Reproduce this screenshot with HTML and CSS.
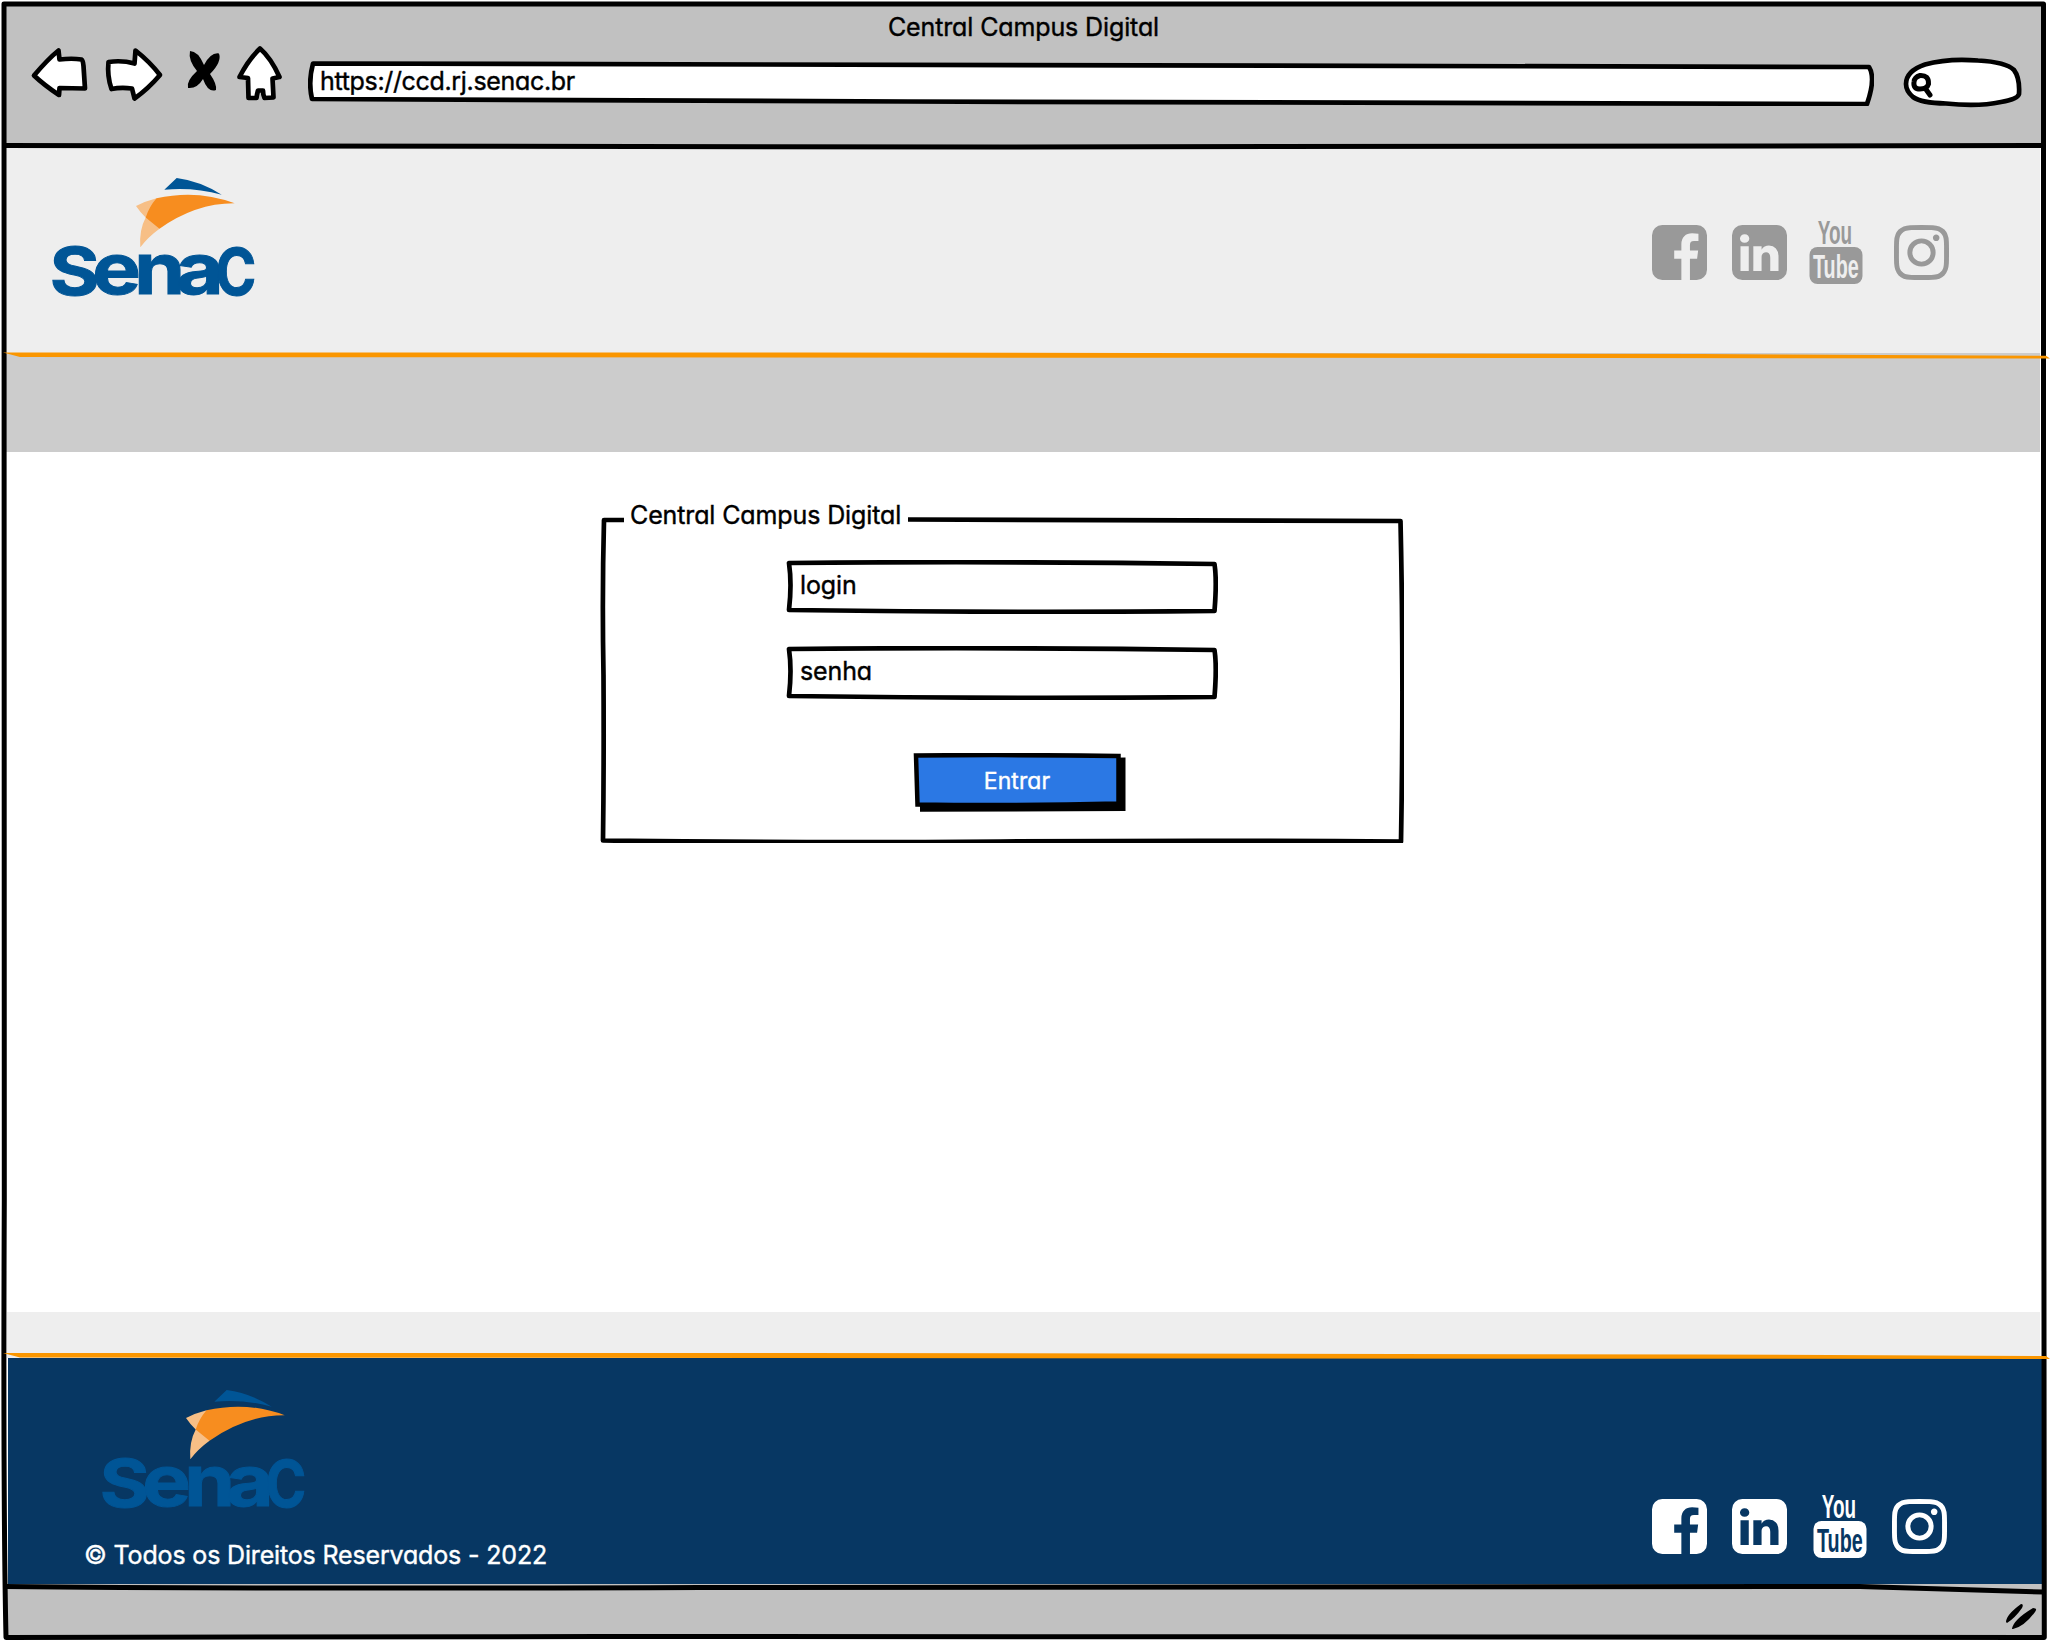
FILE: index.html
```html
<!DOCTYPE html>
<html lang="pt-BR">
<head>
<meta charset="utf-8">
<title>Central Campus Digital</title>
<link rel="stylesheet" href="styles.css">
</head>
<body>
<svg class="defs" width="0" height="0" aria-hidden="true">
  <defs>
    <symbol id="facebook" viewBox="0 0 1536 1536"><path transform="translate(0 1408) scale(1 -1)" d="M1248 1408q119 0 203.5 -84.5t84.5 -203.5v-960q0 -119 -84.5 -203.5t-203.5 -84.5h-188v595h199l30 232h-229v148q0 56 23.5 84t91.5 28l122 1v207q-63 9 -178 9q-136 0 -217.5 -80t-81.5 -226v-171h-200v-232h200v-595h-532q-119 0 -203.5 84.5t-84.5 203.5v960q0 119 84.5 203.5t203.5 84.5h960z"/></symbol>
    <symbol id="linkedin" viewBox="0 0 1536 1536"><path transform="translate(0 1408) scale(1 -1)" d="M237 122h231v694h-231v-694zM483 1030q-1 52 -36 86t-93 34t-94.5 -34t-36.5 -86q0 -51 35.5 -85.5t92.5 -34.5h1q59 0 95 34.5t36 85.5zM1068 122h231v398q0 154 -73 233t-193 79q-136 0 -209 -117h2v101h-231q3 -66 0 -694h231v388q0 38 7 56q15 35 45 59.5t74 24.5q116 0 116 -157v-371zM1536 1120v-960q0 -119 -84.5 -203.5t-203.5 -84.5h-960q-119 0 -203.5 84.5t-84.5 203.5v960q0 119 84.5 203.5t203.5 84.5h960q119 0 203.5 -84.5t84.5 -203.5z"/></symbol>
    <symbol id="instagram" viewBox="0 0 1536 1536"><path transform="translate(0 1408) scale(1 -1)" d="M1024 640q0 106 -75 181t-181 75t-181 -75t-75 -181t75 -181t181 -75t181 75t75 181zM1162 640q0 -164 -115 -279t-279 -115t-279 115t-115 279t115 279t279 115t279 -115t115 -279zM1270 1050q0 -38 -27 -65t-65 -27t-65 27t-27 65t27 65t65 27t65 -27t27 -65zM768 1270q-7 0 -76.5 0.5t-105.5 0t-96.5 -3t-103 -10t-71.5 -18.5q-50 -20 -88 -58t-58 -88q-11 -29 -18.5 -71.5t-10 -103t-3 -96.5t0 -105.5t0.5 -76.5t-0.5 -76.5t0 -105.5t3 -96.5t10 -103t18.5 -71.5q20 -50 58 -88t88 -58q29 -11 71.5 -18.5t103 -10t96.5 -3t105.5 0t76.5 0.5t76.5 -0.5t105.5 0t96.5 3t103 10t71.5 18.5q50 20 88 58t58 88q11 29 18.5 71.5t10 103t3 96.5t0 105.5t-0.5 76.5t0.5 76.5t0 105.5t-3 96.5t-10 103t-18.5 71.5q-20 50 -58 88t-88 58q-29 11 -71.5 18.5t-103 10t-96.5 3t-105.5 0t-76.5 -0.5zM1536 640q0 -229 -5 -317q-10 -208 -124 -322t-322 -124q-88 -5 -317 -5t-317 5q-208 10 -322 124t-124 322q-5 88 -5 317t5 317q10 208 124 322t322 124q88 5 317 5t317 -5q208 -10 322 -124t124 -322q5 -88 5 -317z"/></symbol>
    <symbol id="star" viewBox="0 0 200 70">
      <path fill="#005596" d="M112.3 11.7 124.7 0Q148 3 169.7 16.7Q142 9 112.3 11.7Z"/>
      <path fill="#f7bf86" d="M84 28Q94 23 104.5 20.3L107.5 50.7Q96 59 88.3 69.3Q87 52 93.7 39.5Q88 34 84 28Z"/>
      <path fill="#f78d1f" d="M104.5 20.3Q145 11 182.7 25.3Q144 25 107.5 50.7L93.7 39.5Q97 29 104.5 20.3Z"/>
    </symbol>
  </defs>
</svg>

<div class="browser">
  <header class="toolbar">
    <div class="window-title">Central Campus Digital</div>
    <div class="controls">
      <svg class="nav-icons" viewBox="0 0 260 64" width="260" height="64">
        <g fill="#fff" stroke="#000" stroke-width="4.7" stroke-linejoin="round">
          <path d="M10 35.5Q24 19 34.5 10.5L35.5 19.5Q48 18 57.5 19.5Q59 20 59.5 26L61 48.5L35.5 48L35 55Q20 45 10 35.5Z"/>
          <path d="M84.5 22Q98 20 110.5 23.5L111.5 10.5Q126 22 136 35Q124 49 110.5 58.5L108 48.5Q97 47 87.5 49Q83 36 84.5 22Z"/>
          <path d="M236 8.5Q247 18 255.5 37L248.5 38.5L249.5 57.5L240.5 58Q239 55 239 50.5L234 50.5Q233 54 232.5 58L224.5 58L224 38L215.5 37Q224 20 236 8.5Z"/>
        </g>
        <path d="M166 11Q174 11 180 25Q187 12 195 13.5Q198 22 186 34Q193 44 192 50Q184 53 179 39Q173 49 164 48Q162 41 173 31Q164 20 166 11Z"/>
      </svg>
      <div class="address">
        <svg class="outline" viewBox="0 0 1566 46"><path fill="#fff" stroke="#000" stroke-width="4.7" stroke-linejoin="round" d="M5 3.5Q780 3 1561 7Q1568 18 1559 44Q1000 44 600 41.5Q300 39.5 4 39Q0 22 5 3.5Z"/></svg>
        <span class="url">https://ccd.rj.senac.br</span>
      </div>
      <svg class="search" viewBox="0 0 120 52" width="120" height="52">
        <path fill="#fff" stroke="#000" stroke-width="4.7" d="M3 27Q3 14 22 7.5Q45 1 75 3.5Q103 5 111 13Q117 21 116 37Q115 42 98 45Q75 50 43 46.5Q18 46 10 40Q3 34 3 27Z"/>
        <path fill="none" stroke="#000" stroke-width="5" stroke-linecap="round" d="M17 18.5Q26 18 25.5 27Q24 32 17 32Q10 32 11 25Q11.5 20 17 18.5ZM22 31L27 38"/>
      </svg>
    </div>
  </header>

  <section class="site-header">
    <svg class="logo" viewBox="0 0 200 120" width="200" height="120" role="img" aria-label="Senac">
      <use href="#star" width="200" height="70"/>
      <text class="wordmark" transform="scale(1.15 1)"><tspan font-size="66" x="-2" y="117">S</tspan><tspan font-size="71" x="35 71.5 108" y="116">ena</tspan></text>
      <text class="wordmark" font-size="64" transform="translate(163.5 116.5) scale(.86 1)">C</text>
    </svg>
    <nav class="social">
      <svg class="icon"><use href="#facebook"/></svg>
      <svg class="icon"><use href="#linkedin"/></svg>
      <svg class="youtube" viewBox="0 0 54 64" width="54" height="64"><rect x="0.5" y="27" width="53" height="37" rx="8"/><text class="you" transform="translate(8.7 24) scale(.52 1)" textLength="66" lengthAdjust="spacingAndGlyphs">You</text><text class="tube" transform="translate(4 57.5) scale(.52 1)" textLength="88" lengthAdjust="spacingAndGlyphs">Tube</text></svg>
      <svg class="icon"><use href="#instagram"/></svg>
    </nav>
  </section>
  <div class="band"></div>

  <main class="content">
    <section class="login-box">
      <svg class="outline" viewBox="0 0 804 328"><path fill="none" stroke="#000" stroke-width="4.7" stroke-linejoin="round" d="M24 5L4 5Q2 80 3.5 160Q4 250 3 325.5Q200 328 400 326.5T801 326.5Q804 160 800.5 6Q560 6 308 4.5"/></svg>
      <h1 class="legend">Central Campus Digital</h1>
      <div class="field">
        <svg class="outline" viewBox="0 0 432 54"><path fill="#fff" stroke="#000" stroke-width="4.7" stroke-linejoin="round" d="M3 3Q210 1 428.5 4Q431 20 428.5 51Q220 53 3 50Q6 24 3 3Z"/></svg>
        <span>login</span>
      </div>
      <div class="field">
        <svg class="outline" viewBox="0 0 432 54"><path fill="#fff" stroke="#000" stroke-width="4.7" stroke-linejoin="round" d="M3 3Q210 1 428.5 4Q431 20 428.5 51Q220 53 3 50Q6 24 3 3Z"/></svg>
        <span>senha</span>
      </div>
      <div class="button" role="button">
        <svg class="outline" viewBox="0 0 214 60"><path d="M7 8L212.5 4.5V58L7 58.8Z"/><path fill="#2b78e4" stroke="#000" stroke-width="4.5" d="M3 2.5Q100 1.5 205.5 3V50.5Q100 53 4.5 51.5Z"/></svg>
        <span>Entrar</span>
      </div>
    </section>
  </main>

  <div class="pre-footer"></div>
  <footer class="site-footer">
    <div class="brand">
      <svg class="logo" viewBox="0 0 200 120" width="200" height="120" role="img" aria-label="Senac">
        <use href="#star" width="200" height="70"/>
        <text class="wordmark" transform="scale(1.15 1)"><tspan font-size="66" x="-2" y="117">S</tspan><tspan font-size="71" x="35 71.5 108" y="116">ena</tspan></text>
        <text class="wordmark" font-size="64" transform="translate(163.5 116.5) scale(.86 1)">C</text>
      </svg>
      <p class="copyright">© Todos os Direitos Reservados - 2022</p>
    </div>
    <nav class="social">
      <svg class="icon"><use href="#facebook"/></svg>
      <svg class="icon"><use href="#linkedin"/></svg>
      <svg class="youtube" viewBox="0 0 54 64" width="54" height="64"><rect x="0.5" y="27" width="53" height="37" rx="8"/><text class="you" transform="translate(8.7 24) scale(.52 1)" textLength="66" lengthAdjust="spacingAndGlyphs">You</text><text class="tube" transform="translate(4 57.5) scale(.52 1)" textLength="88" lengthAdjust="spacingAndGlyphs">Tube</text></svg>
      <svg class="icon"><use href="#instagram"/></svg>
    </nav>
  </footer>
  <div class="status-bar">
    <svg viewBox="0 0 36 30" width="36" height="30"><path d="M2 21Q2 14 17 3Q20 3 18 7Q11 17 3 22ZM8 28Q9 19 29 7Q34 7 31 11Q20 26 9 28Z"/></svg>
  </div>

  <svg class="frame" viewBox="0 0 2050 1642" width="2050" height="1642">
    <g fill="none" stroke="#000" stroke-width="5" stroke-linejoin="round">
      <path d="M4 4H2043.5V800Q2043 1300 2044.3 1637.5L1500 1637Q1000 1637 600 1636.5Q300 1636 6 1637.5Q3 1500 4.3 1200L4 4Z"/>
      <path d="M5 145.5Q250 147 1000 147L2043 145.5"/>
      <path d="M5 1586.5Q250 1589 700 1587.5L1860 1586.5L2043 1592"/>
    </g>
    <g fill="#fa9600">
      <path d="M3 352.5H800L1700 354L2046 355.8L2050 358.5L1600 358L20 357Z"/>
      <path d="M3 1353H800L1700 1354.5L2046 1356L2050 1359L1600 1358.7L20 1357.5Z"/>
    </g>
  </svg>
</div>
</body>
</html>
```
FILE: styles.css
```css
* { box-sizing: border-box; }
body { margin: 0; background: #fff; color: #000; font-family: Inter, "Liberation Sans", sans-serif; font-size: 25px; line-height: 30px; letter-spacing: -0.12px; -webkit-text-stroke: 0.4px currentColor; font-feature-settings: "cv11"; }
svg { display: block; flex: none; }
svg text { letter-spacing: 0; -webkit-text-stroke: 0; }
.defs { position: absolute; }
.browser { position: relative; display: flex; flex-direction: column; width: 2050px; height: 1642px; padding: 3px 8px 4px 5px; overflow: hidden; }
.frame, .outline { position: absolute; left: 0; top: 0; pointer-events: none; }
.outline { width: 100%; height: 100%; }

.toolbar { height: 143px; background: #c1c1c1; padding-top: 9px; }
.window-title { text-align: center; }
.controls { display: flex; align-items: flex-start; padding-left: 19px; }
.nav-icons { margin-top: -2px; }
.address { position: relative; width: 1566px; height: 46px; margin: 18px 0 0 24px; padding: 6px 0 0 12px; }
.url { position: relative; letter-spacing: -0.33px; }
.search { margin: 15px 0 0 29px; }

.site-header { height: 207px; margin: 0 2px; background: #eee; display: flex; justify-content: space-between; padding: 32px 91px 0 45px; }
.band { height: 99px; margin: 0 2px 0 1px; background: #ccc; }
.logo, .youtube { overflow: visible; }
.wordmark { font-weight: 700; font-feature-settings: normal; fill: #005596; stroke: #005596; stroke-width: 1px; }

.social { display: flex; align-items: flex-start; padding-top: 47px; fill: #999; --surface: #eee; }
.icon { width: 55px; height: 55px; margin-right: 25px; }
.icon:last-child { margin: 0 0 0 31px; }
.youtube { margin: -5px 0 0 -3px; }
.you, .tube { font: 700 33px "Liberation Sans", sans-serif; }
.tube { fill: var(--surface); }

.content { height: 860px; padding: 63px 0 0 595px; }
.login-box { position: relative; width: 804px; height: 328px; padding-left: 186px; }
.legend { position: relative; width: max-content; margin: 0 0 0 -156px; font-size: 25px; line-height: 30px; font-weight: 400; top: -15px; }
.field { position: relative; width: 432px; height: 54px; margin: 15px 0 32px; padding: 10px 0 0 14px; }
.field span, .button span { position: relative; }
.field + .field { margin-top: 0; }
.button { position: relative; width: 214px; height: 60px; margin: 53px 0 0 127px; padding: 13px 6px 0 0; text-align: center; color: #fff; font-size: 23px; letter-spacing: 0.1px; }

.pre-footer { height: 46px; margin: 0 2px; background: #eee; }
.site-footer { height: 226px; margin: 0 0 0 3px; background: #073763; display: flex; justify-content: space-between; padding: 32px 95px 0 76px; }
.brand .logo { margin-left: 18px; }
.copyright { margin: 30px 0 0; color: #fff; line-height: 30px; letter-spacing: -0.16px; }
.site-footer .social { padding-top: 109px; fill: #fff; --surface: #073763; }
.site-footer .youtube { margin-left: 1px; }
.site-footer .icon:last-child { margin-left: 25px; }
.status-bar { height: 54px; background: #c1c1c1; display: flex; justify-content: flex-end; padding: 17px 2px 0 0; }
```
